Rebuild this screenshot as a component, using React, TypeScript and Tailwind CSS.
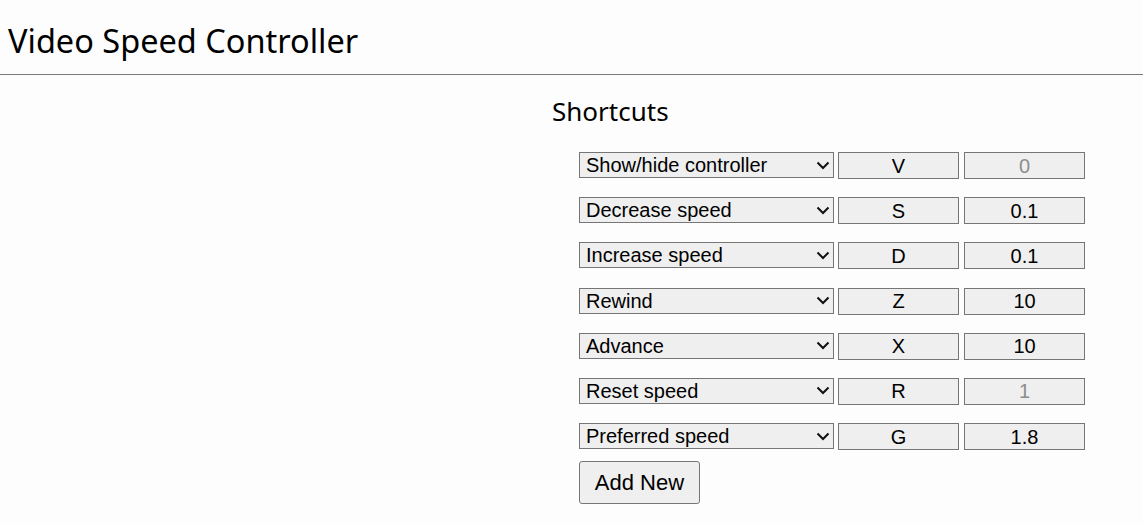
import React from "react";

const rows = [
  { label: "Show/hide controller", key: "V", value: "0", dim: true },
  { label: "Decrease speed", key: "S", value: "0.1" },
  { label: "Increase speed", key: "D", value: "0.1" },
  { label: "Rewind", key: "Z", value: "10" },
  { label: "Advance", key: "X", value: "10" },
  { label: "Reset speed", key: "R", value: "1", dim: true },
  { label: "Preferred speed", key: "G", value: "1.8" },
];

function Chevron() {
  return (
    <svg width="14" height="9" viewBox="0 0 14 9" className="shrink-0">
      <path d="M1.5 1.5 L7 7 L12.5 1.5" fill="none" stroke="#111" strokeWidth="2" />
    </svg>
  );
}

export default function App() {
  return (
    <div className="min-h-[523px] bg-[#fdfdfd] text-black">
      <div className="border-b border-[#7a7a7a] h-[75px] flex items-center pl-[8px]">
        <h1 className="text-[32.5px] font-['Noto_Sans',sans-serif] leading-none pt-[8px]">
          Video Speed Controller
        </h1>
      </div>
      <div className="pl-[552px] pt-[20px]">
        <h3 className="text-[26px] font-['Noto_Sans',sans-serif] leading-[32px]">Shortcuts</h3>
        <div className="pl-[27px] pt-[25px] flex flex-col gap-y-[19.2px] font-['Liberation_Sans',Arial,sans-serif]">
          {rows.map((r) => (
            <div key={r.label} className="flex gap-x-[4px] h-[26px]">
              <div className="w-[255px] h-[26px] bg-[#efefef] border border-[#767676] flex items-center justify-between pl-[6px] pr-[3px] text-[20px] leading-none">
                <span>{r.label}</span>
                <Chevron />
              </div>
              <div className="w-[121px] h-[27px] bg-[#efefef] border border-[#767676] flex items-center justify-center text-[20px] leading-none">
                {r.key}
              </div>
              <div
                className={
                  "w-[121px] h-[27px] ml-[1px] bg-[#efefef] border border-[#767676] flex items-center justify-center text-[20px] leading-none " +
                  (r.dim ? "text-[#8d8d8d]" : "text-black")
                }
              >
                {r.value}
              </div>
            </div>
          ))}
          <div className="-mt-[7px]">
            <button className="w-[121px] h-[43px] bg-[#efefef] border border-[#767676] rounded-[3px] text-[22px] font-['Liberation_Sans',Arial,sans-serif]">
              Add New
            </button>
          </div>
        </div>
      </div>
    </div>
  );
}
